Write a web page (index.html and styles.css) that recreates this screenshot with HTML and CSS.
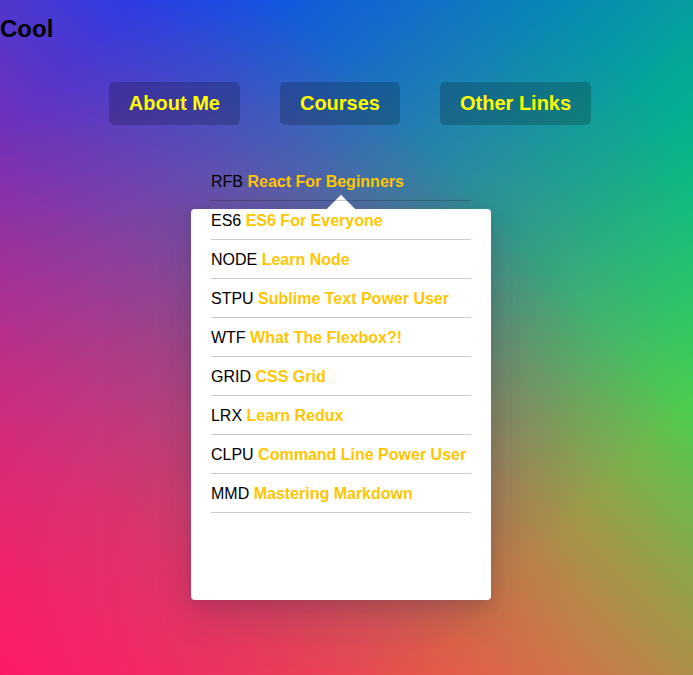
FILE: index.html
```html
<!DOCTYPE html>
<html lang="en">
<head>
<meta charset="UTF-8">
<title>Follow Along Nav</title>
<link rel="stylesheet" href="styles.css">
</head>
<body>
  <h2 class="cool-title">Cool</h2>
  <nav class="top">
    <div class="dropdown-bg"><span class="arrow"></span></div>
    <ul class="cool">
      <li class="cool-item"><a class="cool-link" href="#">About Me</a></li>
      <li class="cool-item">
        <a class="cool-link" href="#">Courses</a>
        <div class="dropdown">
          <ul class="courses">
            <li class="course"><span class="code">RFB</span> <a class="course-link" href="#">React For Beginners</a></li>
            <li class="course"><span class="code">ES6</span> <a class="course-link" href="#">ES6 For Everyone</a></li>
            <li class="course"><span class="code">NODE</span> <a class="course-link" href="#">Learn Node</a></li>
            <li class="course"><span class="code">STPU</span> <a class="course-link" href="#">Sublime Text Power User</a></li>
            <li class="course"><span class="code">WTF</span> <a class="course-link" href="#">What The Flexbox?!</a></li>
            <li class="course"><span class="code">GRID</span> <a class="course-link" href="#">CSS Grid</a></li>
            <li class="course"><span class="code">LRX</span> <a class="course-link" href="#">Learn Redux</a></li>
            <li class="course"><span class="code">CLPU</span> <a class="course-link" href="#">Command Line Power User</a></li>
            <li class="course"><span class="code">MMD</span> <a class="course-link" href="#">Mastering Markdown</a></li>
          </ul>
        </div>
      </li>
      <li class="cool-item"><a class="cool-link" href="#">Other Links</a></li>
    </ul>
  </nav>
</body>
</html>
```
FILE: styles.css
```css
html {
  box-sizing: border-box;
  font-family: "Liberation Sans", Arial, sans-serif;
}
*, *::before, *::after {
  box-sizing: inherit;
}
body {
  margin: 0;
  min-height: 100vh;
  background:
    linear-gradient(45deg, hsla(340, 100%, 55%, 1) 0%, hsla(340, 100%, 55%, 0) 70%),
    linear-gradient(135deg, hsla(225, 95%, 50%, 1) 10%, hsla(225, 95%, 50%, 0) 80%),
    linear-gradient(225deg, hsla(145, 95%, 45%, 1) 10%, hsla(145, 95%, 45%, 0) 80%),
    linear-gradient(315deg, hsla(35, 95%, 55%, 1) 100%, hsla(35, 95%, 55%, 0) 70%);
}
.cool-title {
  margin: 15px 0 19px;
  font-size: 24px;
  line-height: 28px;
  font-weight: bold;
  color: #000;
}
.top {
  position: relative;
}
.cool {
  list-style: none;
  margin: 0;
  padding: 0 0 0 7px;
  display: flex;
  justify-content: center;
}
.cool-item {
  position: relative;
  display: flex;
  justify-content: center;
}
.cool-link {
  color: yellow;
  text-decoration: none;
  font-size: 20px;
  line-height: 23px;
  font-weight: bold;
  background: rgba(0, 0, 0, 0.2);
  padding: 10px 20px;
  display: inline-block;
  margin: 20px;
  border-radius: 5px;
}
.dropdown {
  position: absolute;
  top: 80px;
  width: 300px;
  margin-left: 2px;
  padding: 20px;
  z-index: 2;
}
.courses {
  list-style: none;
  margin: 0;
  padding: 0;
}
.course {
  display: block;
  padding: 11px 0 9px;
  font-size: 16px;
  line-height: 18px;
  border-bottom: 1px solid rgba(0, 0, 0, 0.2);
}
.code {
  color: #000;
}
.course-link {
  color: #ffc600;
  font-weight: bold;
  text-decoration: none;
}
.dropdown-bg {
  position: absolute;
  left: 191px;
  top: 147px;
  width: 300px;
  height: 391px;
  background: #fff;
  border-radius: 4px;
  box-shadow: 0 50px 100px rgba(50, 50, 93, 0.1), 0 15px 35px rgba(50, 50, 93, 0.15), 0 5px 15px rgba(0, 0, 0, 0.1);
  display: flex;
  justify-content: center;
  z-index: 1;
}
.arrow {
  position: absolute;
  width: 20px;
  height: 20px;
  display: block;
  background: #fff;
  transform: translateY(-50%) rotate(45deg);
}
```
